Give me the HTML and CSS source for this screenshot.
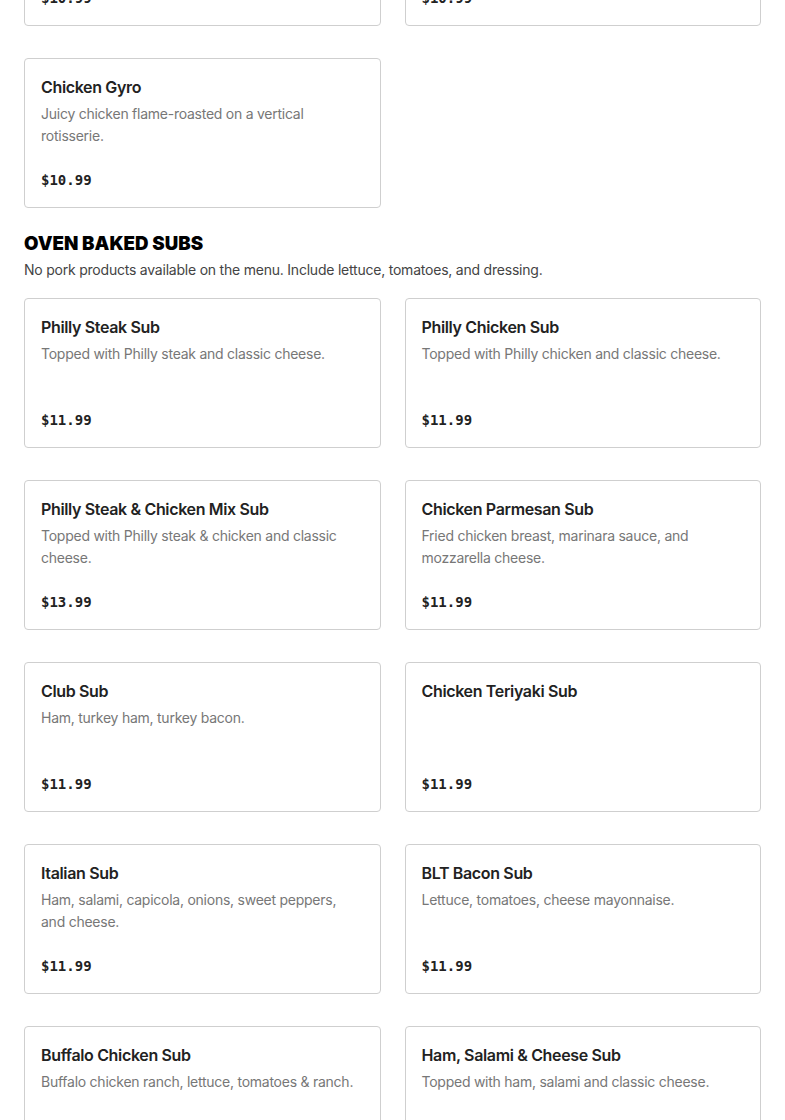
FILE: index.html
```html
<!DOCTYPE html>
<html lang="en">
<head>
<meta charset="utf-8">
<title>Menu</title>
<link rel="stylesheet" href="styles.css">
</head>
<body>
<main class="menu">
  <section class="section section-prev">
    <div class="grid">
      <div class="card"><h3 class="item-name">Lamb Gyro</h3><p class="item-desc">Seasoned lamb and beef.</p><div class="price">$10.99</div></div>
      <div class="card"><h3 class="item-name">Beef Gyro</h3><p class="item-desc">Seasoned beef.</p><div class="price">$10.99</div></div>
      <div class="card"><h3 class="item-name">Chicken Gyro</h3><p class="item-desc">Juicy chicken flame-roasted on a vertical rotisserie.</p><div class="price">$10.99</div></div>
    </div>
  </section>
  <section class="section">
    <h2 class="section-title">OVEN BAKED SUBS</h2>
    <p class="section-desc">No pork products available on the menu. Include lettuce, tomatoes, and dressing.</p>
    <div class="grid">
      <div class="card"><h3 class="item-name">Philly Steak Sub</h3><p class="item-desc">Topped with Philly steak and classic cheese.</p><div class="price">$11.99</div></div>
      <div class="card"><h3 class="item-name">Philly Chicken Sub</h3><p class="item-desc">Topped with Philly chicken and classic cheese.</p><div class="price">$11.99</div></div>
      <div class="card"><h3 class="item-name">Philly Steak &amp; Chicken Mix Sub</h3><p class="item-desc">Topped with Philly steak &amp; chicken and classic cheese.</p><div class="price">$13.99</div></div>
      <div class="card"><h3 class="item-name">Chicken Parmesan Sub</h3><p class="item-desc">Fried chicken breast, marinara sauce, and mozzarella cheese.</p><div class="price">$11.99</div></div>
      <div class="card"><h3 class="item-name">Club Sub</h3><p class="item-desc">Ham, turkey ham, turkey bacon.</p><div class="price">$11.99</div></div>
      <div class="card"><h3 class="item-name">Chicken Teriyaki Sub</h3><div class="price">$11.99</div></div>
      <div class="card"><h3 class="item-name">Italian Sub</h3><p class="item-desc">Ham, salami, capicola, onions, sweet peppers, and cheese.</p><div class="price">$11.99</div></div>
      <div class="card"><h3 class="item-name">BLT Bacon Sub</h3><p class="item-desc">Lettuce, tomatoes, cheese mayonnaise.</p><div class="price">$11.99</div></div>
      <div class="card"><h3 class="item-name">Buffalo Chicken Sub</h3><p class="item-desc">Buffalo chicken ranch, lettuce, tomatoes &amp; ranch.</p><div class="price">$11.99</div></div>
      <div class="card"><h3 class="item-name">Ham, Salami &amp; Cheese Sub</h3><p class="item-desc">Topped with ham, salami and classic cheese.</p><div class="price">$11.99</div></div>
    </div>
  </section>
</main>
</body>
</html>
```
FILE: styles.css
```css
html, body {
  margin: 0;
  padding: 0;
  background: #fff;
}
body {
  font-family: "Inter", "Liberation Sans", sans-serif;
  color: #222;
  overflow: hidden;
}
.menu {
  padding: 0 24px;
  margin-top: -124px;
}
.section-prev {
  margin-bottom: 24px;
}
.grid {
  display: grid;
  grid-template-columns: 1fr 1fr;
  column-gap: 24px;
  row-gap: 32px;
}
.card {
  box-sizing: border-box;
  height: 150px;
  border: 1px solid #cfcfcf;
  border-radius: 4px;
  padding: 16px;
  display: flex;
  flex-direction: column;
}
.item-name {
  margin: 0;
  font-size: 16px;
  line-height: 24px;
  font-weight: 600;
  color: #222;
  letter-spacing: -0.35px;
}
.item-desc {
  margin: 4px 0 0;
  font-size: 14px;
  line-height: 22px;
  color: #777;
  letter-spacing: -0.25px;
}
.price {
  margin-top: auto;
  font-family: "DejaVu Sans Mono", "Liberation Mono", monospace;
  font-weight: 700;
  font-size: 14px;
  line-height: 22px;
  color: #222;
}
.section-title {
  margin: 0;
  font-size: 18.7px;
  line-height: 24px;
  font-weight: 900;
  color: #000;
}
.section-desc {
  margin: 3px 0 17px;
  font-size: 14px;
  line-height: 22px;
  color: #444;
  letter-spacing: -0.22px;
}
```
